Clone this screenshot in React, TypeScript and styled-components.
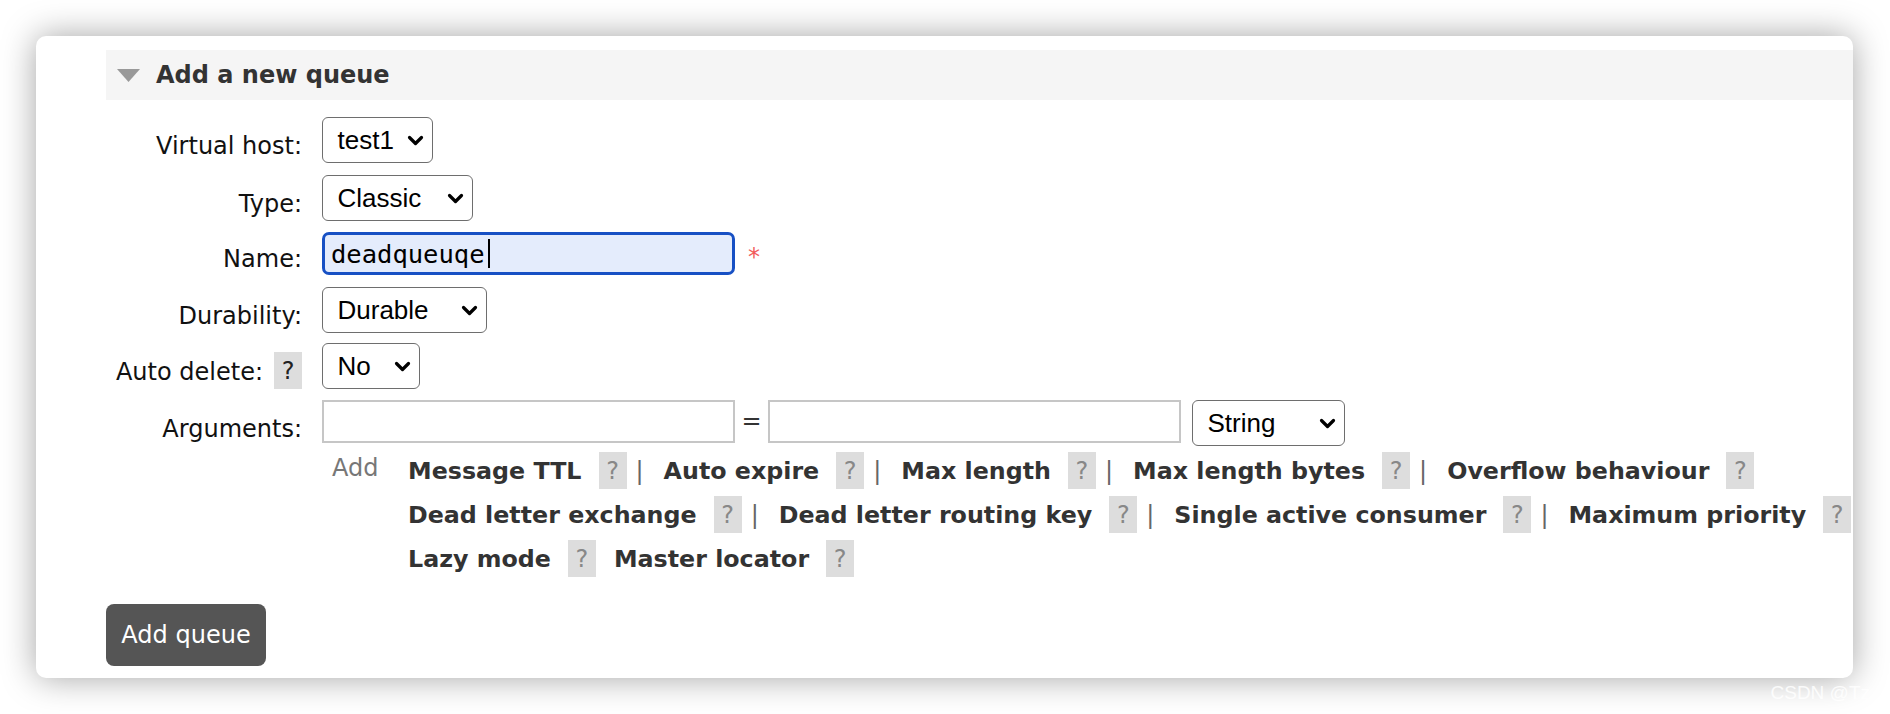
import React from 'react';
import styled, { createGlobalStyle } from 'styled-components';

const GlobalStyle = createGlobalStyle`
    html, body {
        margin: 0;
        padding: 0;
        background: #fff;
    }
    body {
        font-family: "DejaVu Sans", Verdana, sans-serif;
        overflow: hidden;
    }
    * {
        box-sizing: border-box;
    }
`

type ArgItem = { name: string, sep: boolean }

const argLines: ArgItem[][] = [
    [
        { name: 'Message TTL', sep: true },
        { name: 'Auto expire', sep: true },
        { name: 'Max length', sep: true },
        { name: 'Max length bytes', sep: true },
        { name: 'Overflow behaviour', sep: false },
    ],
    [
        { name: 'Dead letter exchange', sep: true },
        { name: 'Dead letter routing key', sep: true },
        { name: 'Single active consumer', sep: true },
        { name: 'Maximum priority', sep: false },
    ],
    [
        { name: 'Lazy mode', sep: false },
        { name: 'Master locator', sep: false },
    ],
]

const Chevron = () => (
    <svg width="17" height="11" viewBox="0 0 17 11">
        <path d="M2.5 2.5 L8.5 8.5 L14.5 2.5" fill="none" stroke="#000" strokeWidth="3.2" strokeLinecap="round" strokeLinejoin="round" />
    </svg>
)

const Select = ({ value, width }: { value: string, width: number }) => (
    <SelectBox $w={width}>
        <span>{value}</span>
        <Chevron />
    </SelectBox>
)

const App = () => {
    return (
        <Page>
            <GlobalStyle />
            <Card>
                <SectionHeader>
                    <svg width="23" height="13" viewBox="0 0 23 13">
                        <polygon points="0,0 23,0 11.5,13" fill="#999" />
                    </svg>
                    <Title>Add a new queue</Title>
                </SectionHeader>

                <Row $mt={17}>
                    <Label>Virtual host:</Label>
                    <Field>
                        <Select value="test1" width={111} />
                    </Field>
                </Row>
                <Row $mt={12}>
                    <Label>Type:</Label>
                    <Field>
                        <Select value="Classic" width={151} />
                    </Field>
                </Row>
                <Row $mt={11}>
                    <Label $pt={13}>Name:</Label>
                    <Field>
                        <NameInput>
                            deadqueuqe
                            <Caret />
                        </NameInput>
                        <Required>*</Required>
                    </Field>
                </Row>
                <Row $mt={12}>
                    <Label>Durability:</Label>
                    <Field>
                        <Select value="Durable" width={165} />
                    </Field>
                </Row>
                <Row $mt={10}>
                    <Label>
                        Auto delete:
                        <LabelHelp>?</LabelHelp>
                    </Label>
                    <Field>
                        <Select value="No" width={98} />
                    </Field>
                </Row>
                <Row $mt={11}>
                    <Label>Arguments:</Label>
                    <Field>
                        <ArgInput />
                        <Equals>=</Equals>
                        <ArgInput />
                        <TypeSelect>
                            <Select value="String" width={153} />
                        </TypeSelect>
                    </Field>
                </Row>
                <Row $mt={6}>
                    <div />
                    <Field>
                        <AddLink>Add</AddLink>
                        <HelpLines>
                            {argLines.map((line, i) => (
                                <HelpLine key={i}>
                                    {line.map((item, j) => (
                                        <React.Fragment key={item.name}>
                                            <ArgName>{item.name}</ArgName>
                                            <HelpBox>?</HelpBox>
                                            {item.sep && <Sep>|</Sep>}
                                            {!item.sep && j < line.length - 1 && <Spacer />}
                                        </React.Fragment>
                                    ))}
                                </HelpLine>
                            ))}
                        </HelpLines>
                    </Field>
                </Row>

                <SubmitButton type="button">Add queue</SubmitButton>
            </Card>
            <Watermark>CSDN @Tz</Watermark>
        </Page>
    );
};

const Page = styled.div`
    position: relative;
    width: 1890px;
    height: 714px;
    padding: 36px 0 0 36px;
`
const Card = styled.div`
    width: 1817px;
    height: 642px;
    background: #fff;
    border-radius: 10px;
    box-shadow: 0 0 34px rgba(0, 0, 0, 0.36);
    padding: 14px 0 0 70px;
`
const SectionHeader = styled.div`
    display: flex;
    align-items: center;
    gap: 16px;
    height: 50px;
    padding-left: 11px;
    background: #f5f5f5;
`
const Title = styled.h2`
    margin: 0;
    font-size: 24px;
    font-weight: bold;
    color: #333;
`
const Row = styled.div<{ $mt: number }>`
    display: grid;
    grid-template-columns: 196px 1fr;
    column-gap: 20px;
    margin-top: ${p => p.$mt}px;
`
const Label = styled.div<{ $pt?: number }>`
    display: flex;
    justify-content: flex-end;
    align-items: flex-start;
    padding-top: ${p => p.$pt ?? 15}px;
    font-size: 24px;
    color: #111;
    white-space: nowrap;
`
const Field = styled.div`
    display: flex;
    align-items: flex-start;
`
const SelectBox = styled.div<{ $w: number }>`
    display: flex;
    align-items: center;
    justify-content: space-between;
    width: ${p => p.$w}px;
    height: 46px;
    padding: 0 8px 0 14.5px;
    border: 1.5px solid #6e6e6e;
    border-radius: 6px;
    background: #fff;
    font-family: "Liberation Sans", Arial, sans-serif;
    font-size: 26px;
    color: #000;
`
const NameInput = styled.div`
    display: flex;
    align-items: center;
    width: 413px;
    height: 43px;
    padding-left: 6px;
    border: 3px solid #1750c4;
    border-radius: 7px;
    background: #e4ecfc;
    font-family: "DejaVu Sans Mono", monospace;
    font-size: 25.5px;
    color: #000;
`
const Caret = styled.span`
    width: 2px;
    height: 29px;
    margin-left: 3px;
    background: #000;
`
const Required = styled.span`
    margin-left: 13px;
    padding-top: 11px;
    font-size: 24px;
    color: #f25b5b;
`
const ArgInput = styled.div`
    width: 413px;
    height: 43px;
    border: 2px solid #c6c6c6;
    background: #fff;
`
const Equals = styled.span`
    width: 33px;
    line-height: 43px;
    text-align: center;
    font-size: 24px;
    color: #333;
`
const TypeSelect = styled.div`
    margin-left: 11px;
`
const AddLink = styled.span`
    width: 86px;
    padding: 2px 0 0 10px;
    font-size: 24px;
    color: #777;
`
const HelpLines = styled.div`
    display: flex;
    flex-direction: column;
    gap: 7px;
`
const HelpLine = styled.div`
    display: flex;
    align-items: center;
    height: 37px;
    white-space: nowrap;
`
const ArgName = styled.span`
    font-size: 23.75px;
    font-weight: bold;
    color: #333;
`
const HelpBox = styled.span`
    display: inline-flex;
    align-items: center;
    justify-content: center;
    width: 28px;
    height: 37px;
    margin-left: 17px;
    background: #ddd;
    font-size: 24px;
    color: #888;
`
const LabelHelp = styled(HelpBox)`
    margin-left: 11px;
    margin-top: -6px;
    color: #222;
`
const Sep = styled.span`
    margin: 0 20px 0 9px;
    font-size: 24px;
    color: #666;
`
const Spacer = styled.span`
    width: 18px;
`
const SubmitButton = styled.button`
    display: block;
    width: 160px;
    height: 62px;
    margin-top: 27px;
    padding: 0;
    border: none;
    border-radius: 8px;
    background: #555;
    color: #fff;
    font-family: "DejaVu Sans", Verdana, sans-serif;
    font-size: 24px;
`
const Watermark = styled.span`
    position: absolute;
    right: 20px;
    bottom: 10px;
    font-family: "Liberation Sans", Arial, sans-serif;
    font-size: 19px;
    color: rgba(255, 255, 255, 0.85);
`

export default App;
